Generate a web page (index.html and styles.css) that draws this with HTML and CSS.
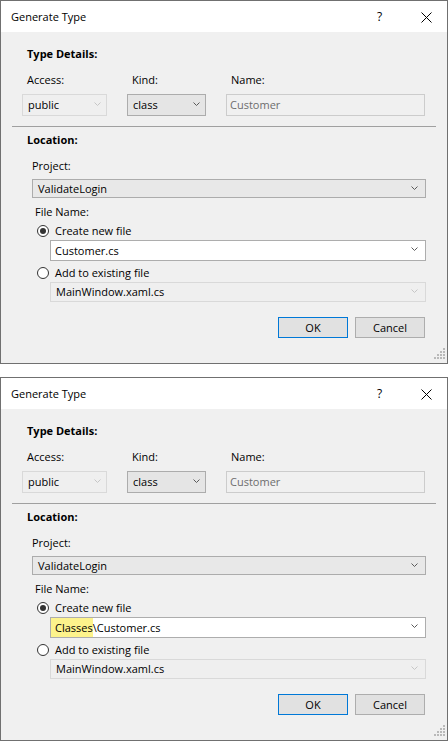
FILE: index.html
```html
<!DOCTYPE html>
<html lang="en">
<head>
<meta charset="utf-8">
<title>Generate Type</title>
<link rel="stylesheet" href="styles.css">
</head>
<body>

<div class="dialog">
  <div class="titlebar">
    <span class="title">Generate Type</span>
    <span class="help">?</span>
    <svg class="close" width="11" height="11" viewBox="0 0 11 11"><path d="M0.5 0.5 L10.5 10.5 M10.5 0.5 L0.5 10.5" stroke="#000" stroke-width="1" fill="none"/></svg>
  </div>
  <div class="content">
    <div class="heading">Type Details:</div>
    <div class="details">
      <div class="label">Access:</div>
      <div class="label">Kind:</div>
      <div class="label">Name:</div>
      <div class="combo disabled"><span>public</span><svg class="chev" width="7" height="4" viewBox="0 0 7 4"><polyline points="0.5,0.5 3.5,3.5 6.5,0.5" fill="none" stroke="currentColor"/></svg></div>
      <div class="combo"><span>class</span><svg class="chev" width="7" height="4" viewBox="0 0 7 4"><polyline points="0.5,0.5 3.5,3.5 6.5,0.5" fill="none" stroke="currentColor"/></svg></div>
      <div class="textbox disabled">Customer</div>
    </div>
    <div class="sep"></div>
    <div class="heading loc">Location:</div>
    <div class="location">
      <div class="label">Project:</div>
      <div class="combo project"><span>ValidateLogin</span><svg class="chev" width="7" height="4" viewBox="0 0 7 4"><polyline points="0.5,0.5 3.5,3.5 6.5,0.5" fill="none" stroke="currentColor"/></svg></div>
      <div class="label filename">File Name:</div>
      <div class="radio-row first"><span class="radio checked"></span><span>Create new file</span></div>
      <div class="combo edit"><span class="value">Customer.cs</span><svg class="chev" width="7" height="4" viewBox="0 0 7 4"><polyline points="0.5,0.5 3.5,3.5 6.5,0.5" fill="none" stroke="currentColor"/></svg></div>
      <div class="radio-row"><span class="radio"></span><span>Add to existing file</span></div>
      <div class="combo existing disabled"><span>MainWindow.xaml.cs</span><svg class="chev" width="7" height="4" viewBox="0 0 7 4"><polyline points="0.5,0.5 3.5,3.5 6.5,0.5" fill="none" stroke="currentColor"/></svg></div>
    </div>
    <div class="buttons">
      <div class="btn default">OK</div>
      <div class="btn">Cancel</div>
    </div>
  </div>
  <svg class="grip" width="12" height="12" viewBox="0 0 12 12">
    <rect x="9" y="0" width="2" height="2"/><rect x="6" y="3" width="2" height="2"/><rect x="9" y="3" width="2" height="2"/>
    <rect x="3" y="6" width="2" height="2"/><rect x="6" y="6" width="2" height="2"/><rect x="9" y="6" width="2" height="2"/>
    <rect x="0" y="9" width="2" height="2"/><rect x="3" y="9" width="2" height="2"/><rect x="6" y="9" width="2" height="2"/><rect x="9" y="9" width="2" height="2"/>
  </svg>
</div>

<div class="dialog">
  <div class="titlebar">
    <span class="title">Generate Type</span>
    <span class="help">?</span>
    <svg class="close" width="11" height="11" viewBox="0 0 11 11"><path d="M0.5 0.5 L10.5 10.5 M10.5 0.5 L0.5 10.5" stroke="#000" stroke-width="1" fill="none"/></svg>
  </div>
  <div class="content">
    <div class="heading">Type Details:</div>
    <div class="details">
      <div class="label">Access:</div>
      <div class="label">Kind:</div>
      <div class="label">Name:</div>
      <div class="combo disabled"><span>public</span><svg class="chev" width="7" height="4" viewBox="0 0 7 4"><polyline points="0.5,0.5 3.5,3.5 6.5,0.5" fill="none" stroke="currentColor"/></svg></div>
      <div class="combo"><span>class</span><svg class="chev" width="7" height="4" viewBox="0 0 7 4"><polyline points="0.5,0.5 3.5,3.5 6.5,0.5" fill="none" stroke="currentColor"/></svg></div>
      <div class="textbox disabled">Customer</div>
    </div>
    <div class="sep"></div>
    <div class="heading loc">Location:</div>
    <div class="location">
      <div class="label">Project:</div>
      <div class="combo project"><span>ValidateLogin</span><svg class="chev" width="7" height="4" viewBox="0 0 7 4"><polyline points="0.5,0.5 3.5,3.5 6.5,0.5" fill="none" stroke="currentColor"/></svg></div>
      <div class="label filename">File Name:</div>
      <div class="radio-row first"><span class="radio checked"></span><span>Create new file</span></div>
      <div class="combo edit"><span class="value"><span class="hl">Classes</span><span>\Customer.cs</span></span><svg class="chev" width="7" height="4" viewBox="0 0 7 4"><polyline points="0.5,0.5 3.5,3.5 6.5,0.5" fill="none" stroke="currentColor"/></svg></div>
      <div class="radio-row"><span class="radio"></span><span>Add to existing file</span></div>
      <div class="combo existing disabled"><span>MainWindow.xaml.cs</span><svg class="chev" width="7" height="4" viewBox="0 0 7 4"><polyline points="0.5,0.5 3.5,3.5 6.5,0.5" fill="none" stroke="currentColor"/></svg></div>
    </div>
    <div class="buttons">
      <div class="btn default">OK</div>
      <div class="btn">Cancel</div>
    </div>
  </div>
  <svg class="grip" width="12" height="12" viewBox="0 0 12 12">
    <rect x="9" y="0" width="2" height="2"/><rect x="6" y="3" width="2" height="2"/><rect x="9" y="3" width="2" height="2"/>
    <rect x="3" y="6" width="2" height="2"/><rect x="6" y="6" width="2" height="2"/><rect x="9" y="6" width="2" height="2"/>
    <rect x="0" y="9" width="2" height="2"/><rect x="3" y="9" width="2" height="2"/><rect x="6" y="9" width="2" height="2"/><rect x="9" y="9" width="2" height="2"/>
  </svg>
</div>

</body>
</html>
```

FILE: styles.css
```css
html, body {
  margin: 0;
  padding: 0;
  background: #ffffff;
}

body {
  font-family: "Segoe UI", "Open Sans", "Noto Sans", sans-serif;
  font-size: 11px;
  line-height: 16px;
  color: #000000;
}

.dialog {
  position: relative;
  box-sizing: border-box;
  width: 448px;
  height: 364px;
  border: 1px solid #707070;
  background: #f0f0f0;
  display: flex;
  flex-direction: column;
}

.dialog + .dialog {
  margin-top: 13px;
}

.titlebar {
  height: 31px;
  flex: none;
  background: #ffffff;
  display: flex;
  align-items: center;
  padding-left: 10px;
  font-size: 11px;
}

.title {
  flex: 1;
}

.help {
  width: 6px;
  margin-right: 38px;
  font-size: 12px;
}

.close {
  margin-right: 15px;
  margin-top: 1px;
}

.content {
  padding: 14px 22px 0 21px;
  display: flex;
  flex-direction: column;
}

.heading {
  font-weight: 700;
  padding-left: 5px;
}

.heading.loc {
  margin-top: 5px;
}

.details {
  display: grid;
  grid-template-columns: 85px 79px 199px;
  column-gap: 20px;
  row-gap: 6px;
  margin-top: 10px;
}

.details .label {
  padding-left: 5px;
}

.combo,
.textbox {
  box-sizing: border-box;
  height: 22px;
  display: flex;
  align-items: center;
  justify-content: space-between;
  border: 1px solid #acacac;
  background: #e5e5e5;
  padding: 0 5px 0 5px;
  color: #000;
}

.combo .chev {
  color: #5a5a5a;
  margin-top: -3px;
  flex: none;
}

.combo.disabled {
  border-color: #d9d9d9;
  background: #efefef;
}

.combo.disabled .chev {
  color: #c6c6c6;
}

.textbox.disabled {
  border-color: #cccccc;
  background: #f0f0f0;
  color: #6d6d6d;
  padding-left: 3px;
}

.sep {
  margin-top: 10px;
  margin-left: -10px;
  width: 424px;
  height: 1px;
  background: #a0a0a0;
}

.location {
  display: flex;
  flex-direction: column;
  padding-left: 10px;
  margin-top: 10px;
}

.combo.project {
  margin-top: 5px;
  width: 394px;
  height: 19px;
  background: #e8e8e8;
}

.combo.project .chev {
  margin-top: -2px;
  margin-right: 2px;
}

.label.filename {
  margin-top: 6px;
  padding-left: 3px;
}

.radio-row {
  display: flex;
  align-items: center;
  margin-top: 4px;
  padding-left: 5px;
  gap: 6px;
}

.radio-row.first {
  margin-top: 3px;
}

.radio {
  box-sizing: border-box;
  width: 12px;
  height: 12px;
  border: 1px solid #333333;
  border-radius: 50%;
  background: #ffffff;
  display: flex;
  align-items: center;
  justify-content: center;
  flex: none;
}

.radio.checked::after {
  content: "";
  width: 6px;
  height: 6px;
  border-radius: 50%;
  background: #333333;
}

.combo.edit {
  margin-top: 1px;
  margin-left: 18px;
  width: 376px;
  height: 21px;
  background: #ffffff;
  border-color: #adadad;
  align-items: stretch;
  padding-left: 0;
}

.combo.edit .value {
  display: flex;
  align-items: center;
  padding-left: 4px;
}

.combo.edit .chev {
  align-self: center;
  margin-right: 2px;
}

.hl {
  align-self: stretch;
  display: flex;
  align-items: center;
  background: #fdf38c;
  margin-left: -4px;
  padding-left: 4px;
}

.combo.existing {
  margin-top: 1px;
  margin-left: 18px;
  width: 376px;
  height: 20px;
  padding-left: 5px;
}

.combo.existing .chev {
  margin-right: 2px;
}

.buttons {
  margin-top: 15px;
  display: flex;
  justify-content: flex-end;
  gap: 7px;
}

.btn {
  box-sizing: border-box;
  width: 70px;
  height: 21px;
  border: 1px solid #adadad;
  background: #e1e1e1;
  display: flex;
  align-items: center;
  justify-content: center;
}

.btn.default {
  border-color: #0078d7;
}

.grip {
  position: absolute;
  right: 1px;
  bottom: 3px;
  fill: #b9b9b9;
}
```
